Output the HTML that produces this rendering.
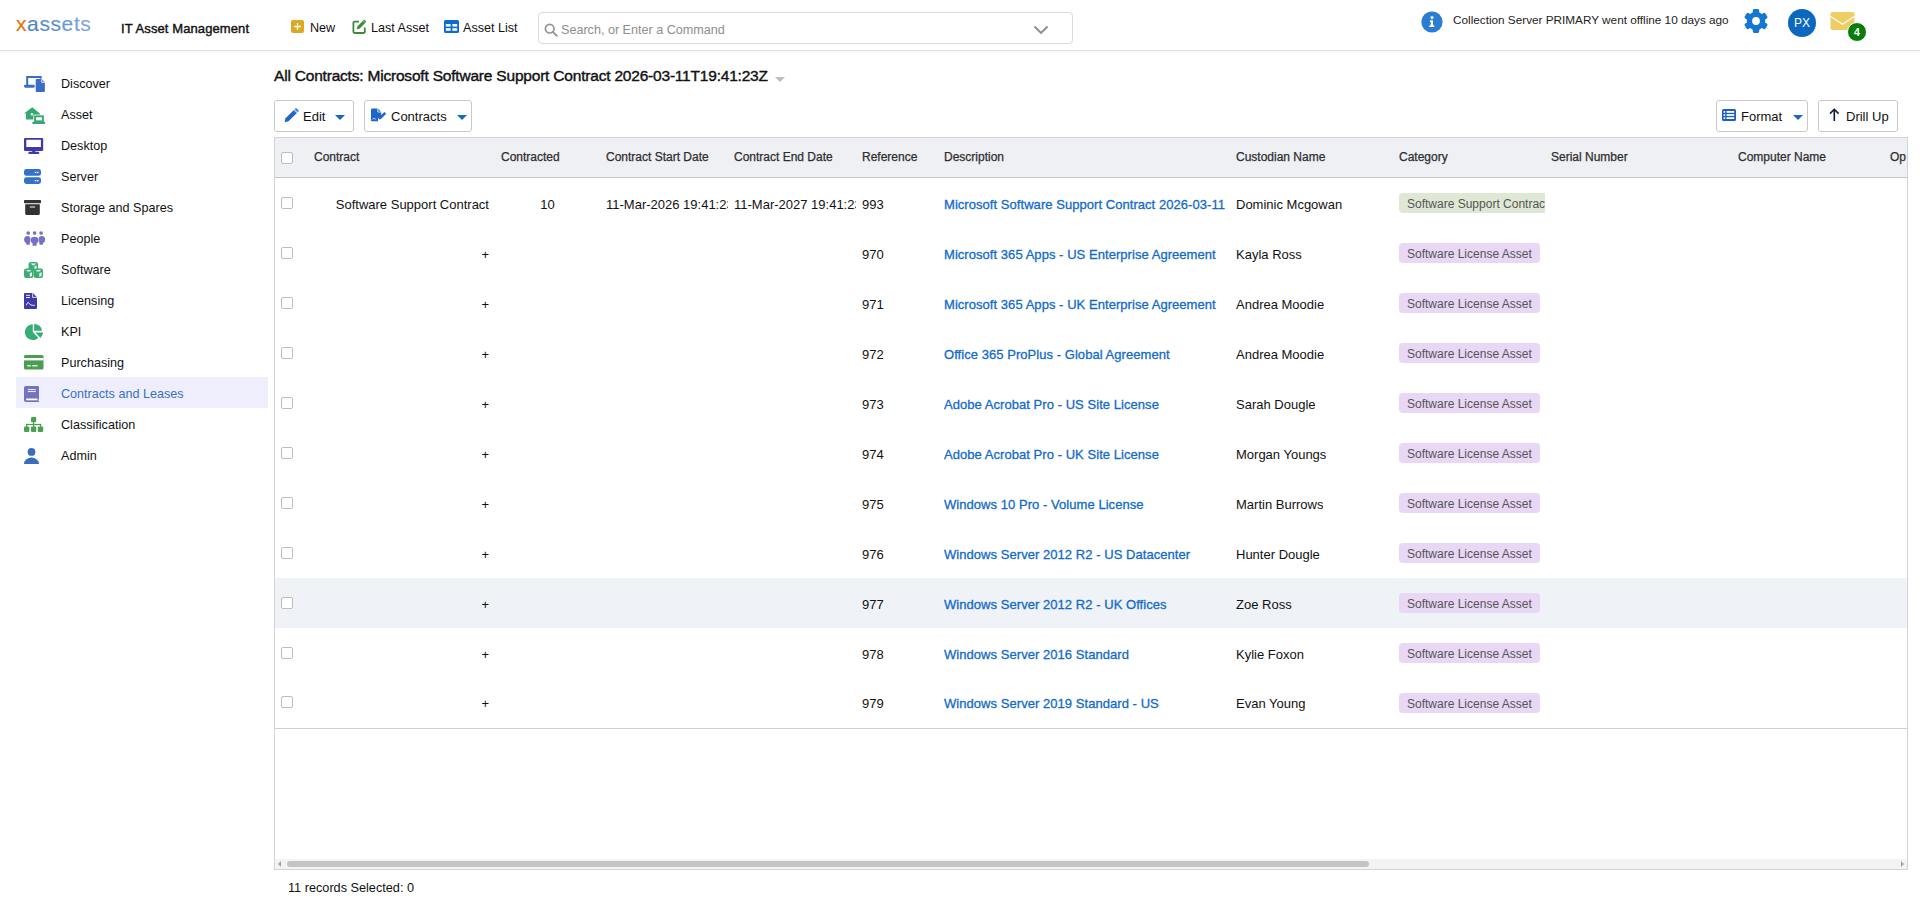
<!DOCTYPE html>
<html><head><meta charset="utf-8">
<style>
*{box-sizing:border-box;margin:0;padding:0}
html,body{width:1920px;height:911px;overflow:hidden;background:#fff}
body{font-family:"Liberation Sans",sans-serif;color:#222;position:relative}
.a{position:absolute;white-space:nowrap}
#hdrline{position:absolute;left:0;top:50px;width:1920px;height:1px;background:#e0dfdd}
#hdrsh{position:absolute;left:0;top:51px;width:1920px;height:3px;background:linear-gradient(#f6f6f6,#fff)}
.logo{left:16px;top:12px;font-size:21px;letter-spacing:0.6px;line-height:24px}
.logo .x{color:#e8730c}
.logo .s{background:linear-gradient(90deg,#4a87c0,#72a2e6);-webkit-background-clip:text;background-clip:text;color:transparent}
.app{left:121px;top:21px;font-size:13px;letter-spacing:0.1px;-webkit-text-stroke:0.4px #111;line-height:16px;color:#111}
.nav{font-size:12.6px;line-height:16px;color:#111;top:20px}
.search{left:538px;top:12px;width:535px;height:32px;border:1px solid #dcdcdc;border-radius:4px}
.si{position:absolute;left:16px;width:252px;height:31px}
.si.on{background:#efeefc}
.si .t{position:absolute;left:45px;top:9px;font-size:12.6px;line-height:16px;color:#111;white-space:nowrap}
.si.on .t{color:#3870c2}
.btn{position:absolute;top:100px;height:32px;border:1px solid #c9c9c9;border-radius:3px;background:#fff}
.btn .t{position:absolute;top:7px;font-size:13px;line-height:16px;color:#111;white-space:nowrap}
.caret{position:absolute;width:0;height:0;border-left:5px solid transparent;border-right:5px solid transparent;border-top:5.5px solid #1568c0}
#tbl{position:absolute;left:274px;top:137px;width:1634px;height:733px;border:1px solid #d4d4d4;overflow:hidden}
#th{position:absolute;left:0;top:0;width:1632px;height:40px;background:#eff0f4;border-bottom:1px solid #c5c5c5}
.hc{position:absolute;top:12px;font-size:12px;line-height:15px;color:#2e2e2e;-webkit-text-stroke:0.25px #2e2e2e;white-space:nowrap}
.row{position:absolute;left:0;width:1632px;height:50px}
.row.hl{background:#eff2f6}
.row.last .c{top:18px}.row.last .cb{top:18px!important}
.c{position:absolute;top:19px;font-size:13px;line-height:16px;color:#111;white-space:nowrap;overflow:hidden}
.lk{color:#126bc6;font-size:13px;letter-spacing:0.05px;-webkit-text-stroke:0.3px #126bc6}
.cb{position:absolute;left:6px;width:12px;height:12px;border:1px solid #bdbdbd;border-radius:2px;background:#fff}
.badge{position:absolute;top:15px;height:20px;border-radius:4px;padding:0 8px;font-size:12px;line-height:23px;color:#555;white-space:nowrap;overflow:hidden}
.bg1{background:#dfe8d5}
.bg2{background:#e8d7f5}
#foot{left:288px;top:880px;font-size:12.7px;line-height:16px;color:#111}
</style></head><body>
<div id="hdrline"></div><div id="hdrsh"></div>
<div class="a logo"><span style="color:#e8730c;-webkit-text-stroke:0.2px #e8730c">x</span><span style="color:#4f87bf;-webkit-text-stroke:0.15px #4f87bf">a</span><span style="color:#5a8ec6;-webkit-text-stroke:0.15px #5a8ec6">s</span><span style="color:#6092cc;-webkit-text-stroke:0.15px #6092cc">s</span><span style="color:#6a9ad5;-webkit-text-stroke:0.15px #6a9ad5">e</span><span style="color:#74a0dc;-webkit-text-stroke:0.15px #74a0dc">t</span><span style="color:#7ca6e4;-webkit-text-stroke:0.15px #7ca6e4">s</span></div>
<div class="a app">IT Asset Management</div>
<div class="a search"></div>
<svg class="ic" style="position:absolute;left:291px;top:20px" width="13" height="13" viewBox="0 0 13 13"><rect x="0" y="0" width="13" height="13" rx="2" fill="#dca924"/><path d="M6.5 3.2v6.6M3.2 6.5h6.6" stroke="#fff" stroke-width="1.3"/></svg>
<div class="a nav" style="left:310px">New</div>
<svg class="ic" style="position:absolute;left:352px;top:19px" width="16" height="15" viewBox="0 0 16 15"><path d="M7 2.6H2.6a1.2 1.2 0 0 0-1.2 1.2v9a1.2 1.2 0 0 0 1.2 1.2h9a1.2 1.2 0 0 0 1.2-1.2V8.6" fill="none" stroke="#3b8a3e" stroke-width="1.8"/><path d="M4.6 10.4l1-3.2L12.2 0.6l2.2 2.2-6.6 6.6z" fill="#3b8a3e"/><path d="M11.2 1.6l2.2 2.2" stroke="#fff" stroke-width="0.6"/></svg>
<div class="a nav" style="left:371px">Last Asset</div>
<svg class="ic" style="position:absolute;left:444px;top:20px" width="15" height="13" viewBox="0 0 15 13"><path d="M1.5 0h12a1.5 1.5 0 0 1 1.5 1.5v10a1.5 1.5 0 0 1-1.5 1.5h-12A1.5 1.5 0 0 1 0 11.5v-10A1.5 1.5 0 0 1 1.5 0z" fill="#0a6ad6"/><g fill="#fff"><rect x="1.8" y="4" width="4.8" height="2.6"/><rect x="8.4" y="4" width="4.8" height="2.6"/><rect x="1.8" y="8.2" width="4.8" height="2.6"/><rect x="8.4" y="8.2" width="4.8" height="2.6"/></g></svg>
<div class="a nav" style="left:463px">Asset List</div>
<svg class="ic" style="position:absolute;left:544px;top:23px" width="14" height="14" viewBox="0 0 14 14"><circle cx="5.7" cy="5.7" r="4.3" fill="none" stroke="#939393" stroke-width="1.7"/><path d="M8.9 8.9l3.9 3.9" stroke="#939393" stroke-width="1.9" stroke-linecap="round"/></svg>
<div class="a" style="left:561px;top:22px;font-size:12.6px;line-height:16px;color:#8e8e8e">Search, or Enter a Command</div>
<svg class="ic" style="position:absolute;left:1033px;top:25px" width="16" height="10" viewBox="0 0 16 10"><path d="M1.5 1.5l6.5 6.5 6.5-6.5" fill="none" stroke="#8c8c8c" stroke-width="1.9"/></svg>
<svg class="ic" style="position:absolute;left:1421px;top:11px" width="22" height="22" viewBox="0 0 22 22"><circle cx="11" cy="11" r="10.6" fill="#2b7dd1"/><circle cx="11" cy="6.6" r="1.5" fill="#fff"/><path d="M9 9.2h3v5h1.3v1.8H8.4v-1.8h1.3v-3.2H9z" fill="#fff"/></svg>
<div class="a" style="left:1453px;top:12px;font-size:11.75px;line-height:15px;color:#222">Collection Server PRIMARY went offline 10 days ago</div>
<svg class="ic" style="position:absolute;left:1744px;top:9px" width="24" height="24" viewBox="0 0 24 24"><g transform="translate(12 12)" fill="#1677d2"><circle r="9.3"/><rect x="-3.2" y="-12" width="6.4" height="24" rx="1.4" transform="rotate(0)"/><rect x="-3.2" y="-12" width="6.4" height="24" rx="1.4" transform="rotate(60)"/><rect x="-3.2" y="-12" width="6.4" height="24" rx="1.4" transform="rotate(120)"/><circle r="3.9" fill="#fff"/></g></svg>
<div class="a" style="left:1788px;top:9px;width:28px;height:28px;border-radius:50%;background:#0b67bf"></div>
<div class="a" style="left:1788px;top:16px;width:28px;text-align:center;font-size:12px;line-height:15px;color:#fff">PX</div>
<svg class="ic" style="position:absolute;left:1830px;top:12px" width="25" height="18" viewBox="0 0 25 18"><rect x="0.5" y="0" width="24" height="18" rx="1.8" fill="#efcd65"/><path d="M0.8 4.6l11.7 7.6 11.7-7.6" fill="none" stroke="#fff" stroke-width="1.2"/></svg>
<div class="a" style="left:1847px;top:22px;width:20px;height:20px;border-radius:50%;background:#087d0c;border:1px solid #fff"></div>
<div class="a" style="left:1847px;top:26px;width:20px;text-align:center;font-size:10.5px;font-weight:bold;line-height:12px;color:#fff">4</div>
<div class="si" style="top:67px"><svg class="ic" style="position:absolute;left:8px;top:9px" width="22" height="17" viewBox="0 0 22 17"><path d="M3.2 8.9V1.1h13.5v2.2" fill="none" stroke="#3b6cc7" stroke-width="2"/><rect x="0" y="8.7" width="10.8" height="3" rx="1.4" fill="#3b6cc7"/><path d="M12.7 3.1H17.6L20.9 6.4V14.9A1 1 0 0 1 19.9 15.9H12.7A1 1 0 0 1 11.7 14.9V4.1A1 1 0 0 1 12.7 3.1z" fill="#3b6cc7" stroke="#fff" stroke-width="1" paint-order="stroke"/><path d="M17.7 3.3V6.3H20.7" fill="none" stroke="#fff" stroke-width="0.9"/></svg><div class="t">Discover</div></div>
<div class="si" style="top:98px"><svg class="ic" style="position:absolute;left:8px;top:9px" width="22" height="18" viewBox="0 0 22 18"><path d="M8.2 0.2L0 6.6H2V12.4H10V8.2H15.9V6.4z" fill="#36a86f"/><rect x="11.1" y="9.3" width="7.8" height="5" fill="none" stroke="#fff" stroke-width="3.4"/><rect x="11.1" y="9.3" width="7.8" height="5" fill="#fff" stroke="#36a86f" stroke-width="1.9"/><rect x="8.2" y="14.8" width="13" height="2.2" rx="1" fill="#36a86f"/><rect x="6.8" y="6.2" width="2" height="2.2" fill="#fff"/></svg><div class="t">Asset</div></div>
<div class="si" style="top:129px"><svg class="ic" style="position:absolute;left:8px;top:9px" width="20" height="17" viewBox="0 0 20 17"><path d="M1.2 0h16.8a1.2 1.2 0 0 1 1.2 1.2v10.6a1.2 1.2 0 0 1-1.2 1.2H1.2A1.2 1.2 0 0 1 0 11.8V1.2A1.2 1.2 0 0 1 1.2 0zM2.3 1.7v7.2h14.6V1.7z" fill="#3f3aa6" fill-rule="evenodd"/><rect x="8.2" y="12.5" width="3" height="2" fill="#3f3aa6"/><rect x="4.3" y="13.8" width="11" height="2.2" rx="1.1" fill="#3f3aa6"/></svg><div class="t">Desktop</div></div>
<div class="si" style="top:160px"><svg class="ic" style="position:absolute;left:8px;top:9px" width="17" height="15" viewBox="0 0 17 15"><rect x="0" y="0" width="17" height="6.8" rx="2.4" fill="#3570c9"/><rect x="0" y="8.2" width="17" height="6.8" rx="2.4" fill="#3570c9"/><g fill="#fff"><rect x="10.8" y="2.8" width="1.5" height="1.3"/><rect x="13" y="2.8" width="1.5" height="1.3"/><rect x="10.8" y="11" width="1.5" height="1.3"/><rect x="13" y="11" width="1.5" height="1.3"/></g></svg><div class="t">Server</div></div>
<div class="si" style="top:191px"><svg class="ic" style="position:absolute;left:8px;top:9px" width="17" height="15" viewBox="0 0 17 15"><rect x="0" y="0" width="17" height="3.2" rx="0.8" fill="#333"/><path d="M1.2 4.2h14.6v9.3a1.5 1.5 0 0 1-1.5 1.5H2.7a1.5 1.5 0 0 1-1.5-1.5z" fill="#333"/><rect x="5.7" y="6.2" width="5.6" height="1.5" rx="0.7" fill="#bbb"/></svg><div class="t">Storage and Spares</div></div>
<div class="si" style="top:222px"><svg class="ic" style="position:absolute;left:8px;top:9px" width="22" height="16" viewBox="0 0 22 16"><g fill="#7571c4"><circle cx="4.2" cy="2" r="1.85"/><circle cx="10.6" cy="2" r="1.85"/><circle cx="17.1" cy="2" r="1.85"/><ellipse cx="3.4" cy="8.6" rx="3.3" ry="3.6"/><rect x="2.2" y="10" width="3.6" height="3.8" rx="0.8"/><ellipse cx="17.8" cy="8.6" rx="3.3" ry="3.6"/><rect x="15.4" y="10" width="3.6" height="3.8" rx="0.8"/></g><g fill="#7571c4" stroke="#fff" stroke-width="0.9" paint-order="stroke"><path d="M6.5 9.3A4.1 3.6 0 0 1 14.7 9.3A4.1 3.6 0 0 1 12.6 12.4V14.8H8.6V12.4A4.1 3.6 0 0 1 6.5 9.3z"/></g></svg><div class="t">People</div></div>
<div class="si" style="top:253px"><svg class="ic" style="position:absolute;left:8px;top:9px" width="20" height="17" viewBox="0 0 20 17"><rect x="4.6" y="0" width="9.5" height="9.5" rx="2.3" fill="#3aad74"/><path d="M6.5 1.5h5.7l-2.85 1.9z" fill="#fff"/><path d="M10.399999999999999 4.6l2.2-1v3.5l-2.2 1.2z" fill="#fff"/><rect x="0" y="6.6" width="9.5" height="9.5" rx="2.3" fill="#3aad74"/><ellipse cx="4.75" cy="8.7" rx="2.5" ry="0.75" fill="#fff"/><path d="M5.8 11.2l2.2-1v3.5l-2.2 1.2z" fill="#fff"/><rect x="9.6" y="6.6" width="9.5" height="9.5" rx="2.3" fill="#3aad74"/><ellipse cx="14.35" cy="8.7" rx="2.5" ry="0.75" fill="#fff"/><path d="M15.399999999999999 11.2l2.2-1v3.5l-2.2 1.2z" fill="#fff"/></svg><div class="t">Software</div></div>
<div class="si" style="top:284px"><svg class="ic" style="position:absolute;left:8px;top:9px" width="13" height="16" viewBox="0 0 13 16"><path d="M1 0h7.8L13 4.2V15a1 1 0 0 1-1 1H1a1 1 0 0 1-1-1V1a1 1 0 0 1 1-1z" fill="#3f3aa6"/><path d="M8.6 0.3v4.1h4.1" fill="none" stroke="#fff" stroke-width="0.8"/><g stroke="#fff" stroke-width="0.9" fill="none"><path d="M2 2.3h4M2 4.5h4"/><path d="M1.8 12.3c1 0 1.5-3 2.3-3s1.2 2.2 2 2.2 1 .8 2 .8h2.7"/></g></svg><div class="t">Licensing</div></div>
<div class="si" style="top:315px"><svg class="ic" style="position:absolute;left:8px;top:8px" width="20" height="18" viewBox="0 0 20 18"><g fill="#36ad74"><path d="M8.8 9.1V1.2A7.9 7.9 0 1 0 14.4 14.7z"/><path d="M10.1 7.8V1A7.6 7.6 0 0 1 18.1 7.8z"/><path d="M11.4 9.5H19.1A8 8 0 0 1 16.4 14.9z"/></g></svg><div class="t">KPI</div></div>
<div class="si" style="top:346px"><svg class="ic" style="position:absolute;left:8px;top:9px" width="20" height="15" viewBox="0 0 20 15"><rect x="0" y="0" width="19.5" height="14.6" rx="1.6" fill="#4a9e50"/><rect x="0" y="3" width="19.5" height="2.4" fill="#fff"/><g fill="#fff"><rect x="3.2" y="10.2" width="3.6" height="1.2"/><rect x="8.2" y="10.2" width="5.4" height="1.2"/></g></svg><div class="t">Purchasing</div></div>
<div class="si on" style="top:377px"><svg class="ic" style="position:absolute;left:8px;top:9px" width="15" height="16" viewBox="0 0 15 16"><path d="M1.8 0h12.2a1 1 0 0 1 1 1v12.6h-0.6v1.3h0.6V16H1.8A1.8 1.8 0 0 1 0 14.2V1.8A1.8 1.8 0 0 1 1.8 0z" fill="#7570c0"/><g fill="#fff" opacity="0.85"><rect x="3.8" y="3" width="8" height="1.1"/><rect x="3.8" y="5" width="8" height="1.1"/></g><rect x="2.2" y="12.5" width="11.3" height="1.8" fill="#fff"/></svg><div class="t">Contracts and Leases</div></div>
<div class="si" style="top:408px"><svg class="ic" style="position:absolute;left:8px;top:9px" width="20" height="15" viewBox="0 0 20 15"><g fill="#4aa050"><rect x="7" y="0" width="5.2" height="5.2" rx="1.2"/><rect x="0" y="9.5" width="5.4" height="5.4" rx="1.2"/><rect x="6.9" y="9.5" width="5.4" height="5.4" rx="1.2"/><rect x="13.8" y="9.5" width="5.4" height="5.4" rx="1.2"/><rect x="9" y="5" width="1.2" height="5"/><rect x="2.1" y="6.9" width="15" height="1.2"/><rect x="2.1" y="6.9" width="1.2" height="3"/><rect x="16" y="6.9" width="1.2" height="3"/></g></svg><div class="t">Classification</div></div>
<div class="si" style="top:439px"><svg class="ic" style="position:absolute;left:8px;top:9px" width="15" height="16" viewBox="0 0 15 16"><g fill="#3a6cc0"><circle cx="7.5" cy="3.9" r="3.9"/><path d="M0 16a7.5 6.5 0 0 1 15 0z"/></g></svg><div class="t">Admin</div></div>
<div class="a" style="left:274px;top:66px;font-size:15.5px;letter-spacing:-0.2px;-webkit-text-stroke:0.4px #111;line-height:19px;color:#111">All Contracts: Microsoft Software Support Contract 2026-03-11T19:41:23Z</div>
<div class="btn" style="left:274px;width:80px"></div>
<svg class="ic" style="position:absolute;left:284px;top:108px" width="15" height="15" viewBox="0 0 15 15"><path d="M0.6 14.2l0.9-3.9L10.4 1.4l3 3-8.9 8.9z" fill="#1f66c8"/><path d="M10.9 0.9l1-1 3 3-1 1z" fill="#1f66c8"/><path d="M9.8 2l3 3" stroke="#fff" stroke-width="0.7"/></svg>
<div class="a" style="left:303px;top:109px;font-size:13px;line-height:16px;color:#111">Edit</div>
<div class="caret" style="left:335px;top:115px"></div>
<div class="btn" style="left:364px;width:108px"></div>
<svg class="ic" style="position:absolute;left:371px;top:108px" width="16" height="14" viewBox="0 0 16 14"><path d="M1 0.6h5.8l3.4 3.4v3.6L7 10.8v2.4H1a1 1 0 0 1-1-1V1.6a1 1 0 0 1 1-1z" fill="#1f66c8"/><path d="M6.8 0.6v3.4h3.4" fill="none" stroke="#fff" stroke-width="0.8"/><path d="M7.6 11.5l0.6-2.4 5.2-5.2 1.8 1.8-5.2 5.2z" fill="#1f66c8"/><path d="M1.6 11.6c.8-1 1.2-2 1.8-1.2s.6 1 1.4.4" fill="none" stroke="#fff" stroke-width="0.8"/></svg>
<div class="a" style="left:391px;top:109px;font-size:13px;line-height:16px;color:#111">Contracts</div>
<div class="caret" style="left:457px;top:115px"></div>
<div class="btn" style="left:1716px;width:92px"></div>
<svg class="ic" style="position:absolute;left:1722px;top:109px" width="14" height="12" viewBox="0 0 14 12"><path d="M1.6 0h10.8A1.6 1.6 0 0 1 14 1.6v8.8a1.6 1.6 0 0 1-1.6 1.6H1.6A1.6 1.6 0 0 1 0 10.4V1.6A1.6 1.6 0 0 1 1.6 0z" fill="#1c5fc0"/><g fill="#fff"><rect x="1.6" y="2" width="1.6" height="1.8"/><rect x="4.6" y="2" width="7.6" height="1.8"/><rect x="1.6" y="5.1" width="1.6" height="1.8"/><rect x="4.6" y="5.1" width="7.6" height="1.8"/><rect x="1.6" y="8.2" width="1.6" height="1.8"/><rect x="4.6" y="8.2" width="7.6" height="1.8"/></g></svg>
<div class="a" style="left:1741px;top:109px;font-size:13px;line-height:16px;color:#111">Format</div>
<div class="caret" style="left:1793px;top:115px"></div>
<div class="btn" style="left:1818px;width:80px"></div>
<svg class="ic" style="position:absolute;left:1829px;top:108px" width="11" height="14" viewBox="0 0 11 14"><path d="M5.3 13V1.6M1 5.6l4.3-4.3 4.3 4.3" fill="none" stroke="#0c1a40" stroke-width="1.6"/></svg>
<div class="a" style="left:1846px;top:109px;font-size:13px;line-height:16px;color:#111">Drill Up</div>
<div class="a" style="left:775px;top:77px;width:0;height:0;border-left:5px solid transparent;border-right:5px solid transparent;border-top:5px solid #bdbdbd"></div>
<div id="tbl">
<div id="th">
<div class="cb" style="top:14px"></div>
<div class="hc" style="left:39px">Contract</div>
<div class="hc" style="left:226px">Contracted</div>
<div class="hc" style="left:331px">Contract Start Date</div>
<div class="hc" style="left:459px">Contract End Date</div>
<div class="hc" style="left:587px">Reference</div>
<div class="hc" style="left:669px">Description</div>
<div class="hc" style="left:961px">Custodian Name</div>
<div class="hc" style="left:1124px">Category</div>
<div class="hc" style="left:1276px">Serial Number</div>
<div class="hc" style="left:1463px">Computer Name</div>
<div class="hc" style="left:1615px">Op</div>
</div>
<div class="row" style="top:40px">
<div class="cb" style="top:19px"></div>
<div class="c" style="left:33px;width:181px;text-align:right">Software Support Contract</div>
<div class="c" style="left:220px;width:105px;text-align:center">10</div>
<div class="c" style="left:331px;width:122px">11-Mar-2026 19:41:23</div>
<div class="c" style="left:459px;width:122px">11-Mar-2027 19:41:23</div>
<div class="c" style="left:587px">993</div>
<div class="c lk" style="left:669px;width:287px">Microsoft Software Support Contract 2026-03-11</div>
<div class="c" style="left:961px">Dominic Mcgowan</div>
<div style="position:absolute;left:1124px;top:0;width:146px;height:50px;overflow:hidden"><div class="badge bg1" style="left:0">Software Support Contract</div></div>
</div>
<div class="row" style="top:90px">
<div class="cb" style="top:19px"></div>
<div class="c" style="left:33px;width:181px;text-align:right">+</div>
<div class="c" style="left:587px">970</div>
<div class="c lk" style="left:669px;width:287px">Microsoft 365 Apps - US Enterprise Agreement</div>
<div class="c" style="left:961px">Kayla Ross</div>
<div class="badge bg2" style="left:1124px">Software License Asset</div>
</div>
<div class="row" style="top:140px">
<div class="cb" style="top:19px"></div>
<div class="c" style="left:33px;width:181px;text-align:right">+</div>
<div class="c" style="left:587px">971</div>
<div class="c lk" style="left:669px;width:287px">Microsoft 365 Apps - UK Enterprise Agreement</div>
<div class="c" style="left:961px">Andrea Moodie</div>
<div class="badge bg2" style="left:1124px">Software License Asset</div>
</div>
<div class="row" style="top:190px">
<div class="cb" style="top:19px"></div>
<div class="c" style="left:33px;width:181px;text-align:right">+</div>
<div class="c" style="left:587px">972</div>
<div class="c lk" style="left:669px;width:287px">Office 365 ProPlus - Global Agreement</div>
<div class="c" style="left:961px">Andrea Moodie</div>
<div class="badge bg2" style="left:1124px">Software License Asset</div>
</div>
<div class="row" style="top:240px">
<div class="cb" style="top:19px"></div>
<div class="c" style="left:33px;width:181px;text-align:right">+</div>
<div class="c" style="left:587px">973</div>
<div class="c lk" style="left:669px;width:287px">Adobe Acrobat Pro - US Site License</div>
<div class="c" style="left:961px">Sarah Dougle</div>
<div class="badge bg2" style="left:1124px">Software License Asset</div>
</div>
<div class="row" style="top:290px">
<div class="cb" style="top:19px"></div>
<div class="c" style="left:33px;width:181px;text-align:right">+</div>
<div class="c" style="left:587px">974</div>
<div class="c lk" style="left:669px;width:287px">Adobe Acrobat Pro - UK Site License</div>
<div class="c" style="left:961px">Morgan Youngs</div>
<div class="badge bg2" style="left:1124px">Software License Asset</div>
</div>
<div class="row" style="top:340px">
<div class="cb" style="top:19px"></div>
<div class="c" style="left:33px;width:181px;text-align:right">+</div>
<div class="c" style="left:587px">975</div>
<div class="c lk" style="left:669px;width:287px">Windows 10 Pro - Volume License</div>
<div class="c" style="left:961px">Martin Burrows</div>
<div class="badge bg2" style="left:1124px">Software License Asset</div>
</div>
<div class="row" style="top:390px">
<div class="cb" style="top:19px"></div>
<div class="c" style="left:33px;width:181px;text-align:right">+</div>
<div class="c" style="left:587px">976</div>
<div class="c lk" style="left:669px;width:287px">Windows Server 2012 R2 - US Datacenter</div>
<div class="c" style="left:961px">Hunter Dougle</div>
<div class="badge bg2" style="left:1124px">Software License Asset</div>
</div>
<div class="row hl" style="top:440px">
<div class="cb" style="top:19px"></div>
<div class="c" style="left:33px;width:181px;text-align:right">+</div>
<div class="c" style="left:587px">977</div>
<div class="c lk" style="left:669px;width:287px">Windows Server 2012 R2 - UK Offices</div>
<div class="c" style="left:961px">Zoe Ross</div>
<div class="badge bg2" style="left:1124px">Software License Asset</div>
</div>
<div class="row" style="top:490px">
<div class="cb" style="top:19px"></div>
<div class="c" style="left:33px;width:181px;text-align:right">+</div>
<div class="c" style="left:587px">978</div>
<div class="c lk" style="left:669px;width:287px">Windows Server 2016 Standard</div>
<div class="c" style="left:961px">Kylie Foxon</div>
<div class="badge bg2" style="left:1124px">Software License Asset</div>
</div>
<div class="row last" style="top:540px">
<div class="cb" style="top:19px"></div>
<div class="c" style="left:33px;width:181px;text-align:right">+</div>
<div class="c" style="left:587px">979</div>
<div class="c lk" style="left:669px;width:287px">Windows Server 2019 Standard - US</div>
<div class="c" style="left:961px">Evan Young</div>
<div class="badge bg2" style="left:1124px">Software License Asset</div>
</div>
<div style="position:absolute;left:0;top:590px;width:1632px;height:1px;background:#cfcfcf"></div>
<div style="position:absolute;left:0;top:721px;width:1632px;height:10px;background:#f3f3f3"></div>
<div style="position:absolute;left:3px;top:723px;width:0;height:0;border-top:3px solid transparent;border-bottom:3px solid transparent;border-right:3px solid #a3a3a3"></div>
<div style="position:absolute;left:1626px;top:723px;width:0;height:0;border-top:3px solid transparent;border-bottom:3px solid transparent;border-left:3px solid #a3a3a3"></div>
<div style="position:absolute;left:12px;top:723px;width:1082px;height:6px;border-radius:3px;background:#c4c4c4"></div>
</div>
<div class="a" id="foot">11 records Selected: 0</div>
</body></html>
